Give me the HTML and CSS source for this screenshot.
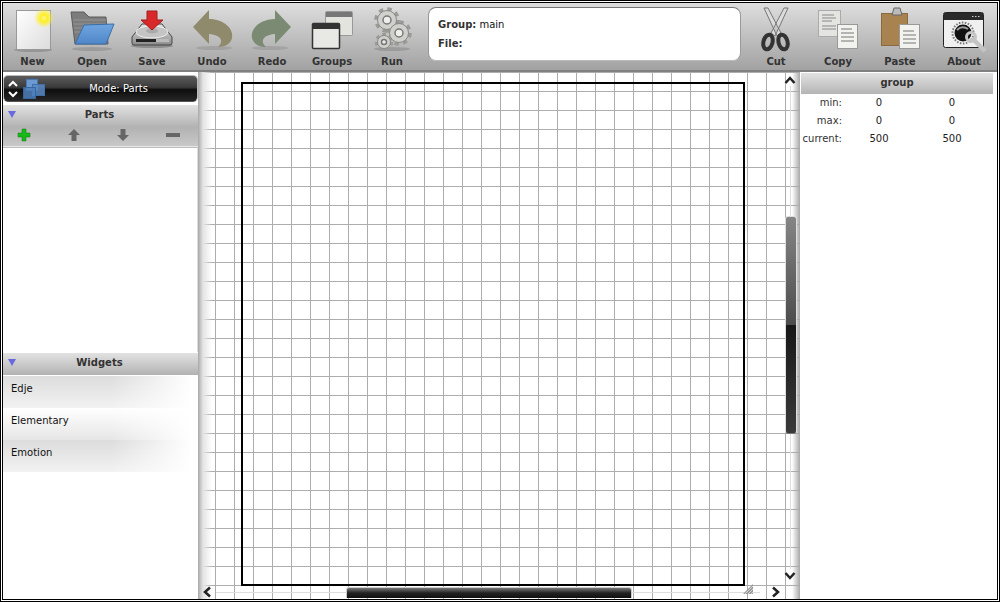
FILE: index.html
```html
<!DOCTYPE html>
<html lang="en">
<head>
    <meta charset="UTF-8">
    <title>Editje</title>
    <link rel="stylesheet" href="styles.css">
</head>
<body>
<div class="frame">
<div class="app">
    <header class="toolbar">
        <div class="tool tool-first">
            <svg class="tool-icon" viewBox="0 0 60 48">
                <defs>
                    <linearGradient id="pageFill" x1="0" y1="0" x2="1" y2="1"><stop offset="0" stop-color="#fff"/><stop offset="1" stop-color="#dcdcdc"/></linearGradient>
                    <radialGradient id="glow"><stop offset="0" stop-color="#fff89a"/><stop offset=".35" stop-color="#ffee22"/><stop offset="1" stop-color="#ffee22" stop-opacity="0"/></radialGradient>
                </defs>
                <ellipse cx="30" cy="45" rx="19" ry="2" fill="#777" opacity=".5"/>
                <rect x="13.5" y="5.5" width="34" height="39" fill="url(#pageFill)" stroke="#999"/>
                <circle cx="41" cy="13" r="10" fill="url(#glow)"/>
            </svg>
            <span class="tool-label">New</span>
        </div>
        <div class="tool">
            <svg class="tool-icon" viewBox="0 0 60 48">
                <defs><linearGradient id="blueFill" x1="0" y1="0" x2="0" y2="1"><stop offset="0" stop-color="#6fa6e0"/><stop offset="1" stop-color="#4f86c8"/></linearGradient></defs>
                <ellipse cx="30" cy="44" rx="20" ry="2" fill="#777" opacity=".4"/>
                <path d="M9 7 H22 L27 12 H44 L46 39 H13 Z" fill="#7c7c7c" stroke="#5c5c5c"/>
                <path d="M11 15 H44 M11 19 H44 M12 23 H44 M12 27 H44" stroke="#949494"/>
                <path d="M22 20 L52 19 L44 39 L13 39 Z" fill="url(#blueFill)" stroke="#3a6ea8" stroke-linejoin="round"/>
            </svg>
            <span class="tool-label">Open</span>
        </div>
        <div class="tool">
            <svg class="tool-icon" viewBox="0 0 60 48">
                <defs><linearGradient id="diskFill" x1="0" y1="0" x2="0" y2="1"><stop offset="0" stop-color="#e4e4e4"/><stop offset="1" stop-color="#8c8c8c"/></linearGradient></defs>
                <ellipse cx="30" cy="41" rx="21" ry="2" fill="#666" opacity=".5"/>
                <path d="M20 19 H40 L50 32 V38 Q50 40 48 40 H12 Q10 40 10 38 V32 Z" fill="url(#diskFill)" stroke="#444"/>
                <ellipse cx="30" cy="27" rx="16" ry="6" fill="#c4c4c4" stroke="#eee"/>
                <ellipse cx="30" cy="26" rx="6" ry="2.500" fill="#aaa"/>
                <rect x="14" y="34" width="20" height="3" fill="#222"/>
                <rect x="34" y="34" width="13" height="3" fill="#bbb"/>
                <path d="M25 6 H35 V15 H41 L30 25 L19 15 H25 Z" fill="#d8282a" stroke="#a51c1c"/>
            </svg>
            <span class="tool-label">Save</span>
        </div>
        <div class="tool">
            <svg class="tool-icon" viewBox="0 0 60 48">
                <ellipse cx="32" cy="43" rx="18" ry="2" fill="#777" opacity=".3"/>
                <path d="M11 22 L27 5 V14 C42 14 52 24 50 33 C49 38 44 42 36 42 C42 37 40 30 27 29 V39 Z" fill="#8f8a6c"/>
            </svg>
            <span class="tool-label">Undo</span>
        </div>
        <div class="tool">
            <svg class="tool-icon" viewBox="0 0 60 48">
                <ellipse cx="28" cy="43" rx="18" ry="2" fill="#777" opacity=".3"/>
                <path d="M49 22 L33 5 V14 C18 14 8 24 10 33 C11 38 16 42 24 42 C18 37 20 30 33 29 V39 Z" fill="#7b8a72"/>
            </svg>
            <span class="tool-label">Redo</span>
        </div>
        <div class="tool">
            <svg class="tool-icon" viewBox="0 0 60 48">
                <rect x="23.5" y="6.5" width="27" height="24" rx="1" fill="#e4e4de" stroke="#999"/>
                <rect x="24" y="7" width="26" height="5" fill="#777"/>
                <rect x="10.5" y="18.5" width="27" height="25" rx="1" fill="#e8e8e4" stroke="#333" stroke-width="1.5"/>
                <rect x="11" y="19" width="26" height="5" fill="#333"/>
            </svg>
            <span class="tool-label">Groups</span>
        </div>
        <div class="tool">
            <svg class="tool-icon" viewBox="0 0 60 48">
                <ellipse cx="30" cy="44" rx="18" ry="2" fill="#777" opacity=".4"/>
                <g fill="none" stroke="#9a9a96" stroke-width="3.500">
                    <circle cx="25" cy="15" r="11" stroke-dasharray="4.400 4.240"/>
                    <circle cx="37" cy="28" r="11" stroke-dasharray="4.400 4.240"/>
                    <circle cx="22" cy="37" r="7.500" stroke-dasharray="3.400 3.300"/>
                </g>
                <g fill="#d0d0cc" stroke="#888">
                    <circle cx="25" cy="15" r="9.500"/>
                    <circle cx="22" cy="37" r="6.500"/>
                    <circle cx="37" cy="28" r="9.500"/>
                </g>
                <g fill="#eeeeea" stroke="#777" stroke-width="1.500">
                    <circle cx="25" cy="15" r="4"/>
                    <circle cx="37" cy="28" r="4"/>
                    <circle cx="22" cy="37" r="2.500"/>
                </g>
            </svg>
            <span class="tool-label">Run</span>
        </div>

        <div class="info">
            <div class="info-row"><b>Group:</b> main</div>
            <div class="info-row"><b>File:</b></div>
        </div>

        <div class="tool tool-wide">
            <svg class="tool-icon" viewBox="0 0 60 48">
                <path d="M18 3 L22 3 L35 28 L31 31 Z M42 3 L38 3 L25 28 L29 31 Z" fill="#dcdcdc" stroke="#777" stroke-linejoin="round"/>
                <g fill="none" stroke="#333" stroke-width="4">
                    <ellipse cx="22" cy="37" rx="4.500" ry="7.500" transform="rotate(15 22 37)"/>
                    <ellipse cx="37" cy="37" rx="4.500" ry="7.500" transform="rotate(-15 37 37)"/>
                </g>
            </svg>
            <span class="tool-label">Cut</span>
        </div>
        <div class="tool tool-wide">
            <svg class="tool-icon" viewBox="0 0 60 48">
                <rect x="10.5" y="5.5" width="22" height="26" fill="#e4e4e0" stroke="#aaa"/>
                <path d="M14 10 H26 M14 13 H28 M14 16 H24 M14 21 H28 M14 24 H28" stroke="#888"/>
                <rect x="29.5" y="19.5" width="20" height="24" fill="#f2f2ee" stroke="#999"/>
                <path d="M33 24 H44 M33 28 H46 M33 32 H46 M33 36 H46" stroke="#777"/>
            </svg>
            <span class="tool-label">Copy</span>
        </div>
        <div class="tool tool-wide">
            <svg class="tool-icon" viewBox="0 0 60 48">
                <rect x="11.5" y="8.5" width="26" height="32" fill="#a9834f" stroke="#8a6a3e"/>
                <path d="M24 3 H30 L32 10 H22 Z" fill="#bbb" stroke="#666"/>
                <rect x="29.5" y="19.5" width="20" height="24" fill="#f2f2ee" stroke="#999"/>
                <path d="M33 26 H44 M33 30 H46 M33 34 H46 M33 38 H46" stroke="#777"/>
            </svg>
            <span class="tool-label">Paste</span>
        </div>
        <div class="tool tool-last">
            <svg class="tool-icon" viewBox="0 0 60 48">
                <rect x="9.5" y="7.5" width="40" height="35" rx="2" fill="#f0f0f0" stroke="#222"/>
                <rect x="10" y="8" width="39" height="7" fill="#2a2a2a"/>
                <path d="M38 11.500 h1.500 M41 11.500 h1.500 M44 11.500 h1.500" stroke="#ccc"/>
                <circle cx="29" cy="28" r="10.500" fill="none" stroke="#777" stroke-width="2" stroke-dasharray="1.500 1.500"/>
                <circle cx="29" cy="28" r="8.500" fill="#111"/>
                <path d="M23 25 Q28 20 34 24" fill="none" stroke="#999" stroke-width="2"/>
                <path d="M38 33 L51 46" stroke="#c4c4c4" stroke-width="4.500"/>
                <circle cx="37" cy="32" r="4.500" fill="none" stroke="#c4c4c4" stroke-width="3"/>
            </svg>
            <span class="tool-label">About</span>
        </div>
    </header>

    <div class="workspace">
        <aside class="left-panel">
            <div class="mode-bar">
                <svg class="mode-arrows" viewBox="0 0 12 20">
                    <path d="M2 7 L6 3 L10 7 M2 13 L6 17 L10 13" fill="none" stroke="#fff" stroke-width="2"/>
                </svg>
                <svg class="mode-icon" viewBox="0 0 22 20">
                    <rect x="3.500" y=".5" width="11" height="11" fill="#6c9ad0" stroke="#4a78b0"/>
                    <rect x="9.500" y="5.500" width="12" height="11" fill="#5a8ac4" fill-opacity=".85" stroke="#3f70aa"/>
                    <rect x=".5" y="8.500" width="12" height="11" fill="#4f80bc" fill-opacity=".85" stroke="#36669f"/>
                </svg>
                <span class="mode-label">Mode: Parts</span>
            </div>

            <div class="section-head">
                <span class="section-arrow"></span>
                <span class="section-title">Parts</span>
            </div>
            <div class="part-tools">
                <svg viewBox="0 0 14 14"><path d="M5 1 H9 V5 H13 V9 H9 V13 H5 V9 H1 V5 H5 Z" fill="#18b818" stroke="#0d7a0d" stroke-width=".5"/></svg>
                <svg viewBox="0 0 14 14"><path d="M7 1 L13 7 H9.500 V13 H4.500 V7 H1 Z" fill="#666"/></svg>
                <svg viewBox="0 0 14 14"><path d="M7 13 L13 7 H9.500 V1 H4.500 V7 H1 Z" fill="#666"/></svg>
                <svg viewBox="0 0 14 14"><rect x="0" y="5" width="14" height="4" fill="#666"/></svg>
            </div>
            <div class="parts-list"></div>

            <div class="section-head">
                <span class="section-arrow"></span>
                <span class="section-title">Widgets</span>
            </div>
            <ul class="widget-list">
                <li class="widget-item widget-item-dark">Edje</li>
                <li class="widget-item">Elementary</li>
                <li class="widget-item widget-item-dark">Emotion</li>
            </ul>
        </aside>

        <main class="canvas">
            <div class="group-box"></div>
            <svg class="scroll-arrow arrow-up" viewBox="0 0 12 8"><path d="M1.500 7 L6 2 L10.500 7" fill="none" stroke="#222" stroke-width="2.500"/></svg>
            <svg class="scroll-arrow arrow-down" viewBox="0 0 12 8"><path d="M1.500 1 L6 6 L10.500 1" fill="none" stroke="#222" stroke-width="2.500"/></svg>
            <svg class="scroll-arrow arrow-left" viewBox="0 0 8 12"><path d="M7 1.500 L2 6 L7 10.500" fill="none" stroke="#222" stroke-width="2.500"/></svg>
            <svg class="scroll-arrow arrow-right" viewBox="0 0 8 12"><path d="M1 1.500 L6 6 L1 10.500" fill="none" stroke="#222" stroke-width="2.500"/></svg>
            <div class="vtrack"></div>
            <div class="htrack"></div>
            <div class="vthumb"></div>
            <div class="hthumb"></div>
            <svg class="grip" viewBox="0 0 10 10"><path d="M0 10 L10 0 V10 Z" fill="#999"/><path d="M2 10 L10 2 M5 10 L10 5 M8 10 L10 8" stroke="#fff" stroke-width=".6"/></svg>
        </main>

        <aside class="right-panel">
            <div class="props-head">group</div>
            <div class="prop-row"><span class="prop-name">min:</span><span class="prop-val">0</span><span class="prop-val">0</span></div>
            <div class="prop-row"><span class="prop-name">max:</span><span class="prop-val">0</span><span class="prop-val">0</span></div>
            <div class="prop-row"><span class="prop-name">current:</span><span class="prop-val">500</span><span class="prop-val">500</span></div>
        </aside>
    </div>
</div>
</div>
</body>
</html>
```

FILE: styles.css
```css
* {
    box-sizing: border-box;
}
html, body {
    margin: 0;
    padding: 0;
    height: 602px;
    overflow: hidden;
    background: #fff;
}
body {
    font-family: "DejaVu Sans", sans-serif;
    font-size: 10px;
    color: #222;
}
.frame {
    height: 602px;
    border: 1px solid #000;
    padding: 1px;
    background: #fff;
}
.app {
    height: 100%;
    border: 1px solid #000;
    display: flex;
    flex-direction: column;
}

/* top toolbar */
.toolbar {
    height: 69px;
    display: flex;
    padding-top: 2px;
    background: linear-gradient(to bottom, #dedede, #a2a2a2);
    border-bottom: 2px solid #808080;
}
.tool {
    width: 60px;
    display: flex;
    flex-direction: column;
    align-items: center;
}
.tool-first {
    width: 59px;
}
.tool-wide {
    width: 62px;
}
.tool-last {
    width: 66px;
}
.tool-icon {
    width: 60px;
    height: 48px;
    flex: none;
}
.tool-label {
    margin-top: 3px;
    line-height: 12px;
    font-weight: bold;
    color: #333;
    white-space: nowrap;
}
.info {
    width: 313px;
    height: 54px;
    margin: 2px 4px 0 6px;
    padding: 7px 9px;
    background: #fff;
    border: 1px solid #bbb;
    border-top-color: #777;
    border-left-color: #999;
    border-right-color: #999;
    border-radius: 8px;
    color: #111;
}
.info-row {
    height: 19px;
    line-height: 19px;
}
.info-row b {
    color: #333;
}

.workspace {
    flex: 1;
    display: flex;
    min-height: 0;
}

/* left column */
.left-panel {
    width: 195px;
    flex: none;
    display: flex;
    flex-direction: column;
    padding-top: 3px;
    background: #fff;
}
.mode-bar {
    height: 27px;
    display: flex;
    align-items: center;
    position: relative;
    margin-bottom: 3px;
    border: 1px solid #bbb;
    border-bottom-color: #555;
    border-radius: 5px;
    background: linear-gradient(to bottom, #5c5c5c, #3a3a3a 45%, #0e0e0e 55%, #262626);
}
.mode-arrows {
    width: 12px;
    height: 20px;
    margin-left: 3px;
}
.mode-icon {
    width: 22px;
    height: 20px;
    margin-left: 4px;
}
.mode-label {
    flex: 1;
    text-align: center;
    color: #fff;
    padding-right: 5px;
    text-shadow: 1px 1px 1px #000;
}
.section-head {
    height: 22px;
    flex: none;
    display: flex;
    align-items: center;
    padding-bottom: 3px;
    background: linear-gradient(to bottom, #e2e2e2, #b2b2b2);
}
.section-arrow {
    width: 0;
    height: 0;
    margin-left: 5px;
    border-left: 4px solid transparent;
    border-right: 4px solid transparent;
    border-top: 7px solid #6a6ae0;
}
.section-title {
    flex: 1;
    text-align: center;
    font-weight: bold;
    color: #333;
    padding-right: 15px;
}
.part-tools {
    height: 20px;
    flex: none;
    display: flex;
    gap: 35.5px;
    align-items: center;
    padding: 0 0 3px 14px;
    background: linear-gradient(to bottom, #b2b2b2, #c8c8c8);
    border-bottom: 1px solid #e8e8e8;
}
.part-tools svg {
    width: 14px;
    height: 14px;
}
.parts-list {
    flex: 1;
    background: #fff;
    border-top: 1px solid #bbb;
    border-right: 1px solid #ddd;
    margin-bottom: 1px;
}
.widget-list {
    list-style: none;
    margin: 0;
    padding: 1px 0 0;
    height: 224px;
    flex: none;
    background: #fff;
}
.widget-item {
    height: 32px;
    padding: 7px 0 0 8px;
    line-height: 12px;
    color: #111;
    background: linear-gradient(to right, rgba(255,255,255,0) 55%, #fff 97%),
                linear-gradient(to bottom, #fff, #e6e6e6);
}
.widget-item-dark {
    background: linear-gradient(to right, rgba(255,255,255,0) 55%, #fff 97%),
                linear-gradient(to bottom, #dcdcdc, #f2f2f2);
}

/* canvas with grid */
.canvas {
    flex: 1;
    position: relative;
    overflow: hidden;
    padding: 10px 0 0 43px;
    background-color: #fff;
    background-image:
        linear-gradient(to right, #a8a8a8, #e4e4e4 5px, rgba(255,255,255,0) 14px),
        linear-gradient(to left, #a8a8a8, rgba(255,255,255,0) 8px),
        linear-gradient(to right, #adadad 1px, transparent 1px),
        linear-gradient(to bottom, #adadad 1px, transparent 1px);
    background-size: 100% 100%, 100% 100%, 19px 19px, 19px 19px;
    background-position: 0 0, 0 0, 17px 0, 0 0;
}
.group-box {
    width: 504px;
    height: 504px;
    border: 2px solid #000;
}
.scroll-arrow {
    position: absolute;
}
.arrow-up {
    width: 12px;
    height: 8px;
    left: 586px;
    top: 4px;
}
.arrow-down {
    width: 12px;
    height: 8px;
    left: 586px;
    top: 500px;
}
.arrow-left {
    width: 8px;
    height: 12px;
    left: 5px;
    top: 514px;
}
.arrow-right {
    width: 8px;
    height: 12px;
    left: 574px;
    top: 514px;
}
.vtrack {
    position: absolute;
    left: 592px;
    top: 14px;
    width: 1px;
    bottom: 30px;
    background: #ddd;
}
.htrack {
    position: absolute;
    left: 18px;
    right: 40px;
    top: 520px;
    height: 1px;
    background: #ddd;
}
.vthumb {
    position: absolute;
    left: 587px;
    top: 144px;
    width: 12px;
    height: 218px;
    border-radius: 3px;
    border: 1px solid #ddd;
    border-bottom-color: #777;
    background: linear-gradient(to bottom, #858585, #4c4c4c 50%, #181818 50%, #3a3a3a);
}
.hthumb {
    position: absolute;
    left: 148px;
    top: 515px;
    width: 286px;
    height: 11px;
    border-radius: 3px 3px 0 0;
    border: 1px solid #ccc;
    border-bottom: none;
    background: linear-gradient(to bottom, #777, #222 50%, #111);
}
.grip {
    position: absolute;
    left: 545px;
    top: 512px;
    width: 10px;
    height: 10px;
}

/* right column */
.right-panel {
    width: 197px;
    flex: none;
    padding: 1px 4px 0 1px;
    background: #fff;
}
.props-head {
    height: 21px;
    line-height: 20px;
    text-align: center;
    font-weight: bold;
    color: #333;
    background: linear-gradient(to bottom, #e2e2e2, #b4b4b4);
}
.prop-row {
    display: grid;
    grid-template-columns: 41px 74px 72px;
    height: 18px;
    line-height: 18px;
}
.prop-name {
    text-align: right;
    color: #333;
}
.prop-val {
    text-align: center;
}
```
